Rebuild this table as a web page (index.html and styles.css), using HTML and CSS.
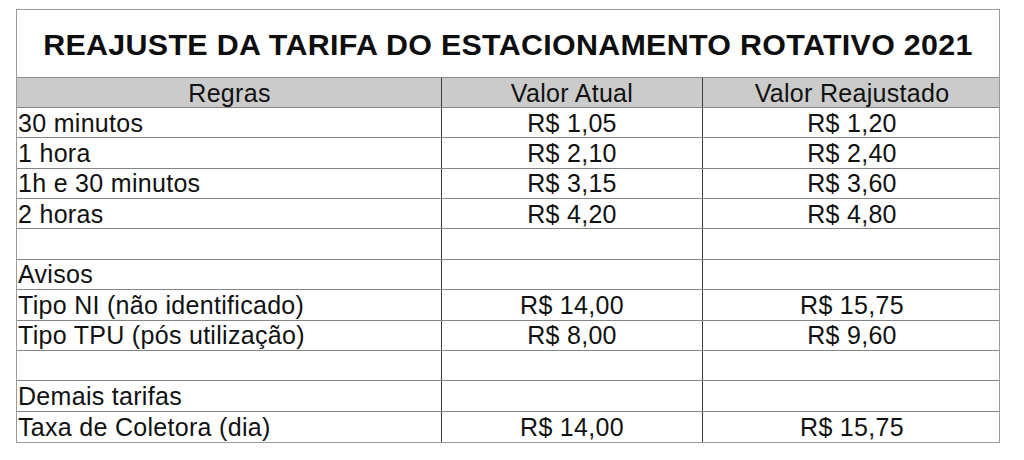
FILE: index.html
```html
<!DOCTYPE html>
<html lang="pt-BR">
<head>
<meta charset="utf-8">
<title>Reajuste da tarifa do estacionamento rotativo 2021</title>
<link rel="stylesheet" href="styles.css">
</head>
<body>
<div class="sheet">
  <div class="title">REAJUSTE DA TARIFA DO ESTACIONAMENTO ROTATIVO 2021</div>
  <div class="row head">
    <div class="cell c1 center">Regras</div>
    <div class="cell c2">Valor Atual</div>
    <div class="cell c3">Valor Reajustado</div>
  </div>
  <div class="row">
    <div class="cell c1">30 minutos</div>
    <div class="cell c2">R$ 1,05</div>
    <div class="cell c3">R$ 1,20</div>
  </div>
  <div class="row">
    <div class="cell c1">1 hora</div>
    <div class="cell c2">R$ 2,10</div>
    <div class="cell c3">R$ 2,40</div>
  </div>
  <div class="row">
    <div class="cell c1">1h e 30 minutos</div>
    <div class="cell c2">R$ 3,15</div>
    <div class="cell c3">R$ 3,60</div>
  </div>
  <div class="row">
    <div class="cell c1">2 horas</div>
    <div class="cell c2">R$ 4,20</div>
    <div class="cell c3">R$ 4,80</div>
  </div>
  <div class="row">
    <div class="cell c1"></div>
    <div class="cell c2"></div>
    <div class="cell c3"></div>
  </div>
  <div class="row">
    <div class="cell c1">Avisos</div>
    <div class="cell c2"></div>
    <div class="cell c3"></div>
  </div>
  <div class="row">
    <div class="cell c1">Tipo NI (não identificado)</div>
    <div class="cell c2">R$ 14,00</div>
    <div class="cell c3">R$ 15,75</div>
  </div>
  <div class="row">
    <div class="cell c1">Tipo TPU (pós utilização)</div>
    <div class="cell c2">R$ 8,00</div>
    <div class="cell c3">R$ 9,60</div>
  </div>
  <div class="row">
    <div class="cell c1"></div>
    <div class="cell c2"></div>
    <div class="cell c3"></div>
  </div>
  <div class="row">
    <div class="cell c1">Demais tarifas</div>
    <div class="cell c2"></div>
    <div class="cell c3"></div>
  </div>
  <div class="row last">
    <div class="cell c1">Taxa de Coletora (dia)</div>
    <div class="cell c2">R$ 14,00</div>
    <div class="cell c3">R$ 15,75</div>
  </div>
</div>
</body>
</html>
```
FILE: styles.css
```css
* { box-sizing: border-box; }
html, body {
  margin: 0;
  padding: 0;
  background: #ffffff;
}
body {
  padding: 9px 0 0 16px;
  font-family: "Liberation Sans", Arial, sans-serif;
  color: #111111;
}
.sheet {
  width: 984px;
  border: 1px solid #9a9a9a;
}
.title {
  height: 68px;
  border-bottom: 1px solid #8a8a8a;
  display: flex;
  align-items: center;
  justify-content: center;
  font-weight: bold;
  font-size: 30.4px;
  letter-spacing: 0.32px;
  padding-top: 1px;
  color: #0e0e0e;
}
.row {
  display: grid;
  grid-template-columns: 424px 261px 1fr;
  height: 30.36px;
  border-bottom: 1px solid #858585;
  font-size: 25px;
  line-height: 28px;
  letter-spacing: 0.3px;
}
.row.head {
  height: 30px;
  background: #cbcbcb;
}
.row.last {
  border-bottom: none;
}
.cell {
  display: flex;
  align-items: center;
  white-space: nowrap;
  overflow: hidden;
}
.c1 {
  padding-left: 1px;
}
.c1.center {
  justify-content: center;
}
.c2, .c3 {
  justify-content: center;
  border-left: 1px solid #3c3c3c;
}
.c3 {
  padding-left: 2px;
}
```
